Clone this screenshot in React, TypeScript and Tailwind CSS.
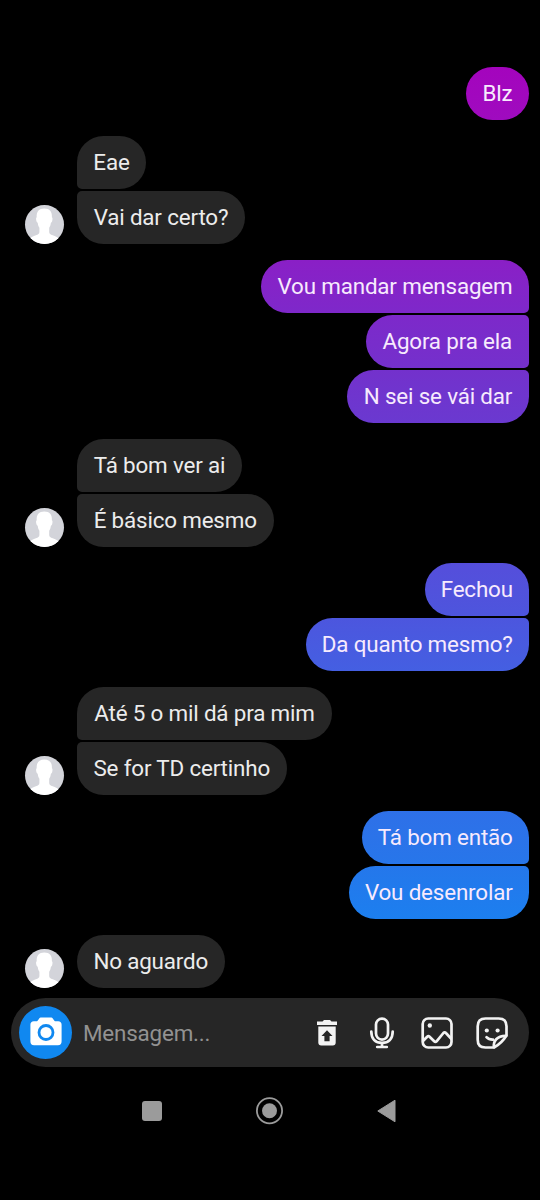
type Message = { text: string; size: string; fill?: string };
type Group = { mine: boolean; messages: Message[] };

const groups: Group[] = [
  { mine: true, messages: [{ text: 'Blz', size: 'w-[63px]', fill: 'bg-linear-to-b from-[#a404bd] to-[#9f0bbf]' }] },
  {
    mine: false,
    messages: [
      { text: 'Eae', size: 'w-[69px]' },
      { text: 'Vai dar certo?', size: 'w-[168px]' },
    ],
  },
  {
    mine: true,
    messages: [
      { text: 'Vou mandar mensagem', size: 'w-[268px]', fill: 'bg-linear-to-b from-[#8a1fc6] to-[#7e28ca]' },
      { text: 'Agora pra ela', size: 'w-[163.5px]', fill: 'bg-linear-to-b from-[#7d29ca] to-[#7430cc]' },
      { text: 'N sei se vái dar', size: 'w-[182px]', fill: 'bg-linear-to-b from-[#7331cc] to-[#6a39d0]' },
    ],
  },
  {
    mine: false,
    messages: [
      { text: 'Tá bom ver ai', size: 'w-[165px]' },
      { text: 'É básico mesmo', size: 'w-[196.5px]' },
    ],
  },
  {
    mine: true,
    messages: [
      { text: 'Fechou', size: 'w-[104.5px]', fill: 'bg-linear-to-b from-[#554edb] to-[#4d55dd]' },
      { text: 'Da quanto mesmo?', size: 'w-[223.5px]', fill: 'bg-linear-to-b from-[#4c56de] to-[#445fe2]' },
    ],
  },
  {
    mine: false,
    messages: [
      { text: 'Até 5 o mil dá pra mim', size: 'w-[255px]' },
      { text: 'Se for TD certinho', size: 'w-[209.5px]' },
    ],
  },
  {
    mine: true,
    messages: [
      { text: 'Tá bom então', size: 'w-[167.5px]', fill: 'bg-linear-to-b from-[#2e70e8] to-[#2776ea]' },
      { text: 'Vou desenrolar', size: 'w-[180.5px]', fill: 'bg-linear-to-b from-[#2477eb] to-[#1c7fef]' },
    ],
  },
  { mine: false, messages: [{ text: 'No aguardo', size: 'w-[147.5px]' }] },
];

function corners(mine: boolean, index: number, count: number) {
  const first = index === 0;
  const last = index === count - 1;
  if (mine) return `${first ? '' : 'rounded-tr-[5px]'} ${last ? '' : 'rounded-br-[5px]'}`;
  return `${first ? '' : 'rounded-tl-[5px]'} ${last ? '' : 'rounded-bl-[5px]'}`;
}

function Avatar() {
  return (
    <svg viewBox="0 0 39 39" className="size-[39px] shrink-0 rounded-full bg-[#d3d4da]">
      <path
        d="M19.300 3.500c-5.400 0-7.900 3.300-7.600 8.800-.8.300-.7 1.800-.4 3.200.3 1.400.8 2 1.400 2.200.2 2.300.9 3.900 1.700 5v4.300c0 1.900-1.300 2.500-3.500 3.300-2.800 1-4.500 1.700-6 3.400V39h28.800v-5.300c-1.500-1.700-3.200-2.400-6-3.400-2.200-.8-3.500-1.400-3.500-3.300v-4.300c.8-1.100 1.500-2.700 1.700-5 .6-.2 1.100-.8 1.400-2.200.3-1.400.4-2.900-.4-3.200.3-5.500-2.200-8.800-7.600-8.800z"
        fill="#fff"
      />
    </svg>
  );
}

function Conversation() {
  return (
    <div className="flex flex-col gap-4 pt-[67px] pr-[11px] pl-[25px]">
      {groups.map((group, g) => (
        <div key={g} className={`flex items-end gap-[13px] ${group.mine ? 'justify-end' : ''}`}>
          {!group.mine && <Avatar />}
          <div className={`flex flex-col gap-0.5 ${group.mine ? 'items-end' : 'items-start'}`}>
            {group.messages.map((message, i) => (
              <div
                key={message.text}
                className={`flex h-[53px] items-center justify-center rounded-[26.5px] text-[22.4px] leading-none tracking-[-0.17px] whitespace-nowrap ${message.size} ${
                  group.mine ? `text-[#f7eafd] ${message.fill}` : 'bg-[#262626] text-[#ececec]'
                } ${corners(group.mine, i, group.messages.length)}`}
              >
                {message.text}
              </div>
            ))}
          </div>
        </div>
      ))}
    </div>
  );
}

function Composer() {
  return (
    <div className="mt-2.5 mr-[11px] ml-[11px] flex h-[69px] items-center rounded-full bg-[#262626] pr-[21px] pl-[8px]">
      <div className="flex size-[53px] items-center justify-center rounded-full bg-[#1088f0] pb-0.5">
        <svg viewBox="0 0 32 29" className="h-[29px] w-8">
          <path
            d="M11.500.6h9c1.200 0 2 .4 2.600 1.300l1.300 1.800c.3.400.8.600 1.400.600h2.400c2.100 0 3.400 1.400 3.400 3.500v16.500c0 2.600-1.200 4-3.700 4H4.100c-2.500 0-3.700-1.400-3.700-4V7.800c0-2.100 1.300-3.500 3.400-3.500h2.400c.6 0 1.100-.2 1.400-.6l1.300-1.800c.6-.9 1.400-1.300 2.600-1.300z"
            fill="#fff"
          />
          <circle cx="16" cy="15.500" r="7" fill="none" stroke="#1088f0" strokeWidth="2.800" />
        </svg>
      </div>
      <div className="ml-[11px] flex-1 pt-0.5 text-[22.4px] leading-none tracking-[-0.19px] text-[#929292]">Mensagem...</div>
      <div className="flex items-center gap-[23px] text-[#f3f3f3]">
        <svg viewBox="0 0 32 32" className="size-8" fill="currentColor">
          <path d="M6 4.600h5.500L13 3.100h6l1.500 1.500H26v3.500H6z" />
          <path fillRule="evenodd" d="M7.300 9.400h17.400v16.200a3 3 0 0 1-3 3H10.300a3 3 0 0 1-3-3zM16 13.200l-5.500 5.800h2.900v5.300h5.200v-5.300h2.900z" />
        </svg>
        <svg viewBox="0 0 32 32" className="size-8" fill="none" stroke="currentColor" strokeWidth="2.700" strokeLinecap="round">
          <rect x="10" y="1.600" width="12" height="21" rx="6" />
          <path d="M5.300 14.500c0 7.500 4.200 11.400 10.700 11.400s10.700-3.900 10.700-11.400M16 26v3.700M11.200 30h9.600" />
        </svg>
        <svg viewBox="0 0 32 32" className="size-8" fill="none" stroke="currentColor" strokeWidth="2.700" strokeLinejoin="round">
          <rect x="1.700" y="1.500" width="28.800" height="29" rx="5.500" />
          <circle cx="8.800" cy="8.500" r="2.200" fill="currentColor" stroke="none" />
          <path d="M2 24l4.200-4.300c.8-.8 1.600-.8 2.400 0l4.600 4.600c.8.8 1.600.8 2.400 0l6.800-8.300c.8-.9 1.700-.9 2.500 0l5.600 6" />
        </svg>
        <svg viewBox="0 0 32 32" className="size-8" fill="none" stroke="currentColor" strokeWidth="2.700" strokeLinejoin="round" strokeLinecap="round">
          <path d="M18 30.500H9.500c-5.200 0-7.800-2.600-7.800-7.800V9.300c0-5.200 2.600-7.800 7.800-7.800h13.200c5.200 0 7.800 2.600 7.800 7.800v9.200c-3 4.800-7 9-12.500 12z" />
          <path d="M18 30.200c-1-5.800 2.800-11.700 12.200-11.400" />
          <path d="M10.500 20.200c1.700 1.900 3.700 2.600 6.500 2.500" />
          <circle cx="10.800" cy="13.500" r="2.100" fill="currentColor" stroke="none" />
          <circle cx="21.600" cy="13.500" r="2.100" fill="currentColor" stroke="none" />
        </svg>
      </div>
    </div>
  );
}

function SystemNavigation() {
  return (
    <div className="mt-[30px] flex h-7 items-center justify-between pr-[143px] pl-[142px] text-[#9b9b9b]">
      <div className="size-5 rounded-[3px] bg-current" />
      <svg viewBox="0 0 28 28" className="size-7">
        <circle cx="13.500" cy="13.800" r="12.600" fill="none" stroke="currentColor" strokeWidth="1.800" />
        <circle cx="13.500" cy="13.800" r="7.500" fill="currentColor" />
      </svg>
      <svg viewBox="0 0 20 24" className="h-6 w-5">
        <path d="M18 1.200v21.600L.8 12z" fill="currentColor" stroke="currentColor" strokeLinejoin="round" />
      </svg>
    </div>
  );
}

export default function App() {
  return (
    <main className="h-[1200px] w-[540px] overflow-hidden bg-black font-[Roboto,sans-serif]">
      <Conversation />
      <Composer />
      <SystemNavigation />
    </main>
  );
}
